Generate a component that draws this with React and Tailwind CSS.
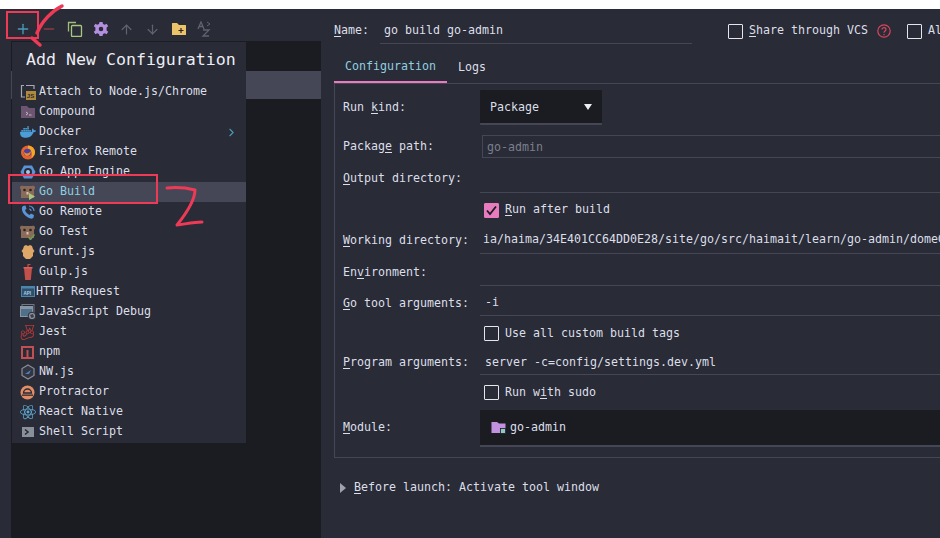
import React from 'react';
import { Plus, Minus, ArrowUp, ArrowDown, ChevronRight } from 'lucide-react';
import { SiDocker, SiJest, SiReact } from 'react-icons/si';

const mono = '[font-family:"DejaVu_Sans_Mono",monospace]';

const Gopher = ({ badge }) => (
  <svg width="17" height="16" viewBox="0 0 17 16">
    <path d="M1 3.500 C1 2 2.500 1.500 4 2 L13 2 C14.500 1.500 16 2 16 3.500 C16 5 15 5.500 15 6 L15 14 L2 14 L2 6 C2 5.500 1 5 1 3.500 Z" fill="#8a6a58" />
    <circle cx="5.500" cy="6" r="1.300" fill="#2b2320" />
    <circle cx="11.500" cy="6" r="1.300" fill="#2b2320" />
    <rect x="7.500" y="8" width="2" height="2.500" fill="#d8c4b0" />
    {badge === 'run' && <path d="M10 9 L16 12.500 L10 16 Z" fill="#a9c77f" />}
    {badge === 'test' && <path d="M9.500 13 L11.500 15.500 L15.500 10.500" fill="none" stroke="#6f9c55" strokeWidth="1.500" />}
  </svg>
);

const NodeAttach = () => (
  <svg width="16" height="16" viewBox="0 0 16 16">
    <path d="M6 1.500 H14 V5 M1.500 4 V13 H5" fill="none" stroke="#a5a9b5" strokeWidth="1.200" />
    <path d="M1.500 4 V1.500 H4" fill="none" stroke="#a5a9b5" strokeWidth="1.200" />
    <rect x="6" y="7" width="10" height="9" fill="#b08a3c" />
    <text x="6.800" y="14.300" fontSize="6" fontWeight="700" fill="#292b36" fontFamily="Liberation Sans">JS</text>
  </svg>
);

const Compound = () => (
  <svg width="16" height="16" viewBox="0 0 16 16">
    <path d="M1 2 H7 L9 4 H15 V14 H1 Z" fill="#6b5570" />
    <path d="M6 8 L8 9.500 L6 11 M9 11 H11.500" fill="none" stroke="#c9b9cc" strokeWidth="1" />
  </svg>
);

const Firefox = () => (
  <svg width="16" height="16" viewBox="0 0 16 16">
    <circle cx="8" cy="8.500" r="7" fill="#e8622c" />
    <path d="M8 1.500 A7 7 0 0 1 15 8.500 C15 11 13 13 11 14 C13 11 12 7 8 5 Z" fill="#f5a623" />
    <circle cx="7.500" cy="8.500" r="3.800" fill="#4a3fa5" />
    <path d="M4 8 C6 10 9 10 11 7 C11 10 9 12 7 12 C5 12 4 10 4 8 Z" fill="#f08a24" />
  </svg>
);

const AppEngine = () => (
  <svg width="16" height="16" viewBox="0 0 16 16">
    <path d="M4 1.500 H12 L15.500 8 L12 14.500 H4 L0.500 8 Z" fill="#5a93d6" />
    <circle cx="8" cy="8" r="4" fill="#292b36" />
    <circle cx="8" cy="8" r="2" fill="#a9c6e8" />
  </svg>
);

const GoRemote = () => (
  <svg width="16" height="16" viewBox="0 0 16 16">
    <path d="M3 2 L5.500 1.500 L6.500 5 L5 6 C5.500 8 7.500 10 9.500 11 L11 9.500 L14 11 L13.500 13.500 C13 15 10.500 15 8 13.500 C5 12 2.500 9 2 6 C1.700 4 2 2.800 3 2 Z" fill="#5a93d6" />
    <path d="M9 2 A5 5 0 0 1 14 7 M9 5 A2 2 0 0 1 11 7" fill="none" stroke="#5a93d6" strokeWidth="1.200" />
  </svg>
);

const Grunt = () => (
  <svg width="16" height="16" viewBox="0 0 16 16">
    <path d="M4 2 L6 1 L8 2 L10 1 L12 2 L13 5 L14.500 7 L13 9 L13 12 L10 15 L6 15 L3 12 L3 9 L1.500 7 L3 5 Z" fill="#e0a868" />
  </svg>
);

const Gulp = () => (
  <svg width="16" height="17" viewBox="0 0 16 17">
    <path d="M4 4 H12 L10.800 16 H5.200 Z" fill="#c4504c" />
    <path d="M3.500 3 H12.500 V4.500 H3.500 Z" fill="#d9625c" />
    <path d="M8 3 V0.800 L10.500 0.200" fill="none" stroke="#c4504c" strokeWidth="1.200" />
  </svg>
);

const HttpRequest = () => (
  <svg width="14" height="12" viewBox="0 0 14 12">
    <rect x="0.500" y="0.500" width="13" height="10" fill="#2f4f6b" stroke="#4d86ad" />
    <rect x="0.500" y="0.500" width="13" height="2" fill="#4d86ad" />
    <text x="2.500" y="8.500" fontSize="4.500" fontWeight="700" fill="#a9cfe8" fontFamily="Liberation Sans">API</text>
  </svg>
);

const JsDebug = () => (
  <svg width="16" height="16" viewBox="0 0 16 16">
    <rect x="2" y="0.500" width="12" height="10" fill="none" stroke="#6f7684" />
    <rect x="0.500" y="2.500" width="12" height="10" fill="#4e7189" stroke="#8a95a3" />
    <rect x="1" y="3" width="11" height="2" fill="#8a95a3" />
    <circle cx="12" cy="12" r="3.800" fill="#8a8e99" stroke="#292b36" />
    <path d="M10 11 L13 10 L14 13 L11.500 14 Z" fill="#3a3d49" />
  </svg>
);

const Npm = () => (
  <svg width="13" height="13" viewBox="0 0 13 13">
    <rect x="1" y="1" width="11" height="11" fill="none" stroke="#c24f52" strokeWidth="2" />
    <rect x="5.500" y="4" width="2" height="7" fill="#c24f52" />
  </svg>
);

const Nw = () => (
  <svg width="14" height="16" viewBox="0 0 14 16">
    <path d="M7 1 L13 4.500 V11.500 L7 15 L1 11.500 V4.500 Z" fill="#32353f" stroke="#8a8e99" strokeWidth="1.200" />
    <path d="M4 10 L10 6 L8 10 Z" fill="#4d7fc4" />
  </svg>
);

const Protractor = () => (
  <svg width="15" height="15" viewBox="0 0 15 15">
    <circle cx="7.500" cy="7.500" r="7" fill="#e28d66" />
    <path d="M3.500 8 A4 4 0 0 1 11.500 8 Z" fill="none" stroke="#292b36" strokeWidth="1.300" />
    <rect x="2" y="9.500" width="11" height="1.300" fill="#292b36" />
  </svg>
);

const Shell = () => (
  <svg width="12" height="10" viewBox="0 0 12 10">
    <rect width="12" height="10" fill="#8a9099" />
    <path d="M3 2.500 L6 5 L3 7.500" fill="none" stroke="#292b36" strokeWidth="1.600" />
  </svg>
);

const items = [
  { name: 'Attach to Node.js/Chrome', icon: <NodeAttach /> },
  { name: 'Compound', icon: <Compound /> },
  { name: 'Docker', icon: <SiDocker size={16} color="#4a9fd8" />, more: true },
  { name: 'Firefox Remote', icon: <Firefox /> },
  { name: 'Go App Engine', icon: <AppEngine /> },
  { name: 'Go Build', icon: <Gopher badge="run" />, active: true },
  { name: 'Go Remote', icon: <GoRemote /> },
  { name: 'Go Test', icon: <Gopher badge="test" /> },
  { name: 'Grunt.js', icon: <Grunt /> },
  { name: 'Gulp.js', icon: <Gulp /> },
  { name: 'HTTP Request', icon: <HttpRequest />, tight: true },
  { name: 'JavaScript Debug', icon: <JsDebug /> },
  { name: 'Jest', icon: <SiJest size={15} color="#b83a3a" /> },
  { name: 'npm', icon: <Npm /> },
  { name: 'NW.js', icon: <Nw /> },
  { name: 'Protractor', icon: <Protractor /> },
  { name: 'React Native', icon: <SiReact size={16} color="#5fa8d3" /> },
  { name: 'Shell Script', icon: <Shell /> },
];

const Check = ({ checked }) => (
  <span className={`flex w-[15px] h-[15px] shrink-0 items-center justify-center rounded-[1px] border ${checked ? 'border-[#e87ac0] bg-[#e87ac0]' : 'border-[#e4e6ec]'}`}>
    {checked && (
      <svg width="13" height="13" viewBox="0 0 13 13">
        <path d="M2 6.500 L5 10 L11 2.500" fill="none" stroke="#1b1c21" strokeWidth="1.800" />
      </svg>
    )}
  </span>
);

const Label = ({ before, mark, after }) => (
  <div className="w-[145px] shrink-0 whitespace-pre pl-[8px]">
    {before}<span className="underline underline-offset-2">{mark}</span>{after}
  </div>
);

const Row = ({ h, label, children, line }) => (
  <div className={`flex items-center ${h}`}>
    {label || <div className="w-[145px] shrink-0" />}
    <div className={`flex h-full min-w-0 flex-1 items-center whitespace-pre ${line ? 'border-b border-[#454757]' : ''}`}>
      {children}
    </div>
  </div>
);

const Toolbar = () => (
  <div className="flex h-[32px] items-center pl-[15px] pt-[8px]">
    <div className="flex w-[26px] justify-start"><Plus size={16} color="#4a9bb8" /></div>
    <div className="flex w-[26px] justify-start"><Minus size={16} color="#8a3b45" /></div>
    <div className="flex w-[26px] justify-start">
      <svg width="16" height="16" viewBox="0 0 16 16">
        <path d="M1.500 10.500 V1.500 H9" fill="none" stroke="#9fbf78" strokeWidth="1.300" />
        <rect x="4.500" y="4.500" width="10" height="11" rx="1" fill="none" stroke="#a9c77f" strokeWidth="1.300" />
      </svg>
    </div>
    <div className="flex w-[26px] justify-start">
      <svg width="16" height="16" viewBox="0 0 16 16">
        <path fillRule="evenodd" fill="#b48fe0" d="M6.500 1 H9.500 L10 3 L11.800 3.800 L13.600 2.800 L15.200 5.300 L13.600 6.600 V9.400 L15.200 10.700 L13.600 13.200 L11.800 12.200 L10 13 L9.500 15 H6.500 L6 13 L4.200 12.200 L2.400 13.200 L0.800 10.700 L2.400 9.400 V6.600 L0.800 5.300 L2.400 2.800 L4.200 3.800 L6 3 Z M8 5.700 A2.300 2.300 0 1 0 8 10.300 A2.300 2.300 0 1 0 8 5.700 Z" />
      </svg>
    </div>
    <div className="flex w-[26px] justify-start"><ArrowUp size={15} color="#5f6371" /></div>
    <div className="flex w-[26px] justify-start"><ArrowDown size={15} color="#5f6371" /></div>
    <div className="flex w-[26px] justify-start">
      <svg width="16" height="14" viewBox="0 0 16 14">
        <path d="M1 1.500 Q1 1 1.500 1 H6 L8 3 H14.500 Q15 3 15 3.500 V12.500 Q15 13 14.500 13 H1.500 Q1 13 1 12.500 Z" fill="#ecc26b" />
        <path d="M10 6 V11 M7.500 8.500 H12.500" stroke="#2b2320" strokeWidth="1.200" />
      </svg>
    </div>
    <div className="flex w-[26px] justify-start">
      <svg width="14" height="16" viewBox="0 0 14 16">
        <path d="M1 8 L4 1 L7 8 M2.200 5.500 H5.800" fill="none" stroke="#5f6371" strokeWidth="1.300" />
        <path d="M6 9 H12 L6 15 H12" fill="none" stroke="#5f6371" strokeWidth="1.300" />
        <path d="M10 1 L13 3 L10 5" fill="none" stroke="#5f6371" strokeWidth="1" />
      </svg>
    </div>
  </div>
);

const Popup = () => (
  <div className="absolute left-[12px] top-[41px] z-10 h-[402px] w-[234px] border-t border-[#1b1c21] bg-[#292b36]">
    <div className="flex h-[37px] items-center pl-[14px] text-[16.6px] font-medium text-[#eceef4]">Add New Configuration</div>
    <div className="mt-[3px]">
      {items.map((item) => (
        <div key={item.name} className={`flex h-[20px] items-center pl-[7px] ${item.active ? 'bg-[#454757] text-[#8fcfe0]' : ''}`}>
          <div className={`flex w-[17px] shrink-0 items-center justify-center ${item.tight ? '' : 'mr-[3px]'}`}>{item.icon}</div>
          <span className="flex-1 whitespace-pre">{item.name}</span>
          {item.more && <ChevronRight size={13} color="#4a9bb8" className="mr-[8px]" />}
        </div>
      ))}
    </div>
  </div>
);

const Marks = () => (
  <svg className="pointer-events-none absolute left-0 top-0 z-20" width="260" height="240" viewBox="0 0 260 240">
    <g fill="none" stroke="#ee3a56">
      <rect x="7" y="12" width="31" height="26" strokeWidth="2" />
      <rect x="9" y="175" width="148" height="28" strokeWidth="2" />
      <path d="M62 6 C52 11 42 21 37 33" strokeWidth="3.500" strokeLinecap="round" />
      <path d="M32 38 L40 45" strokeWidth="3.500" strokeLinecap="round" />
      <path d="M167 188 C177 187 187 188 195 190 C195 200 185 215 177 225 C185 224 195 222 202 222" strokeWidth="3" strokeLinecap="round" strokeLinejoin="round" />
    </g>
  </svg>
);

export default function App() {
  return (
    <div className={`relative flex h-[538px] w-[940px] flex-col overflow-hidden bg-white text-[11.63px] text-[#dcdfe8] ${mono}`}>
      <div className="h-[9px] shrink-0 bg-white" />
      <div className="flex min-h-0 flex-1 bg-[#292b36]">
        <div className="flex w-[322px] shrink-0 flex-col">
          <Toolbar />
          <div className="ml-[11px] mr-[1px] min-h-0 flex-1 bg-[#1b1c21] pt-[30px]">
            <div className="h-[28px] bg-[#454757]" />
          </div>
        </div>

        <div className="min-w-0 flex-1 pl-[12px]">
          <div className="flex h-[34px] items-start">
            <div className="flex h-[35px] w-[358px] shrink-0 items-center pt-[9px]">
              <div className="w-[46px] shrink-0 whitespace-pre"><span className="underline underline-offset-2">N</span>ame:</div>
              <div className="flex h-full flex-1 items-center border-b border-[#454757] pl-[4px] whitespace-pre">go build go-admin</div>
            </div>
            <div className="ml-[36px] mt-[11px] flex h-[22px] shrink-0 items-center whitespace-pre">
              <Check />
              <span className="ml-[6px]"><span className="underline underline-offset-2">S</span>hare through VCS</span>
              <svg className="ml-[9px]" width="14" height="14" viewBox="0 0 14 14">
                <circle cx="7" cy="7" r="6.200" fill="none" stroke="#d9455f" strokeWidth="1.200" />
                <path d="M5 5.500 C5 3 9 3 9 5.500 C9 7 7 7 7 8.800 M7 10 V11.200" fill="none" stroke="#d9455f" strokeWidth="1.200" />
              </svg>
              <span className="ml-[16px]"><Check /></span>
              <span className="ml-[6px]">Al</span>
            </div>
          </div>

          <div className="mt-[4px] flex h-[37px] items-end border-b border-[#454757]">
            <div className="flex h-[36px] w-[113px] items-center justify-center border-b-2 border-[#e87ac0] pt-[5px] text-[#8fcfe0]">Configuration</div>
            <div className="flex h-[36px] items-center pl-[11px] pt-[5px]">Logs</div>
          </div>

          <div className="h-[374px] border-b border-l border-[#454757] pt-[6px]">
            <div className="flex h-[35px] items-center">
              <Label before="Run " mark="k" after="ind:" />
              <div className="flex h-full w-[122px] items-center justify-between rounded-[1px] border-b-2 border-[#454757] bg-[#1b1c21] pl-[10px] pr-[10px]">
                <span className="pt-[2px]">Package</span>
                <svg width="8" height="6" viewBox="0 0 8 6"><path d="M0 0 H8 L4 6 Z" fill="#eceef4" /></svg>
              </div>
            </div>
            <div className="mt-[10px] flex h-[23px] items-center">
              <Label before="Packag" mark="e" after=" path:" />
              <div className="ml-[2px] flex h-full flex-1 items-center border border-r-0 border-[#454757] pl-[4px] pt-[2px] text-[#7a7f8e]">go-admin</div>
            </div>
            <div className="mt-[6px]">
              <Row h="h-[29px]" line label={<Label before="" mark="O" after="utput directory:" />} />
            </div>
            <Row h="h-[34px]">
              <div className="flex items-center pl-[4px]">
                <Check checked />
                <span className="ml-[6px]"><span className="underline underline-offset-2">R</span>un after build</span>
              </div>
            </Row>
            <Row h="h-[27px]" line label={<Label before="" mark="W" after="orking directory:" />}>
              <span className="pl-[3px]">ia/haima/34E401CC64DD0E28/site/go/src/haimait/learn/go-admin/domeGorm</span>
            </Row>
            <div className="mt-[6px]">
              <Row h="h-[26px]" line label={<Label before="En" mark="v" after="ironment:" />} />
            </div>
            <div className="mt-[5px]">
              <Row h="h-[25px]" line label={<Label before="" mark="G" after="o tool arguments:" />}>
                <span className="pl-[5px]">-i</span>
              </Row>
            </div>
            <Row h="h-[35px]">
              <div className="flex items-center pl-[4px]">
                <Check />
                <span className="ml-[6px]">Use all custom build tags</span>
              </div>
            </Row>
            <Row h="h-[24px]" line label={<Label before="" mark="P" after="rogram arguments:" />}>
              <span className="pl-[5px]">server -c=config/settings.dev.yml</span>
            </Row>
            <Row h="h-[35px]">
              <div className="flex items-center pl-[4px]">
                <Check />
                <span className="ml-[6px]">Run w<span className="underline underline-offset-2">i</span>th sudo</span>
              </div>
            </Row>
            <div className="flex h-[37px] items-center">
              <div className="pb-[2px]"><Label before="" mark="M" after="odule:" /></div>
              <div className="flex h-full flex-1 items-center border-b-2 border-[#454757] bg-[#1b1c21] pl-[11px]">
                <svg width="15" height="13" viewBox="0 0 15 13">
                  <path d="M0.500 1 H6 L8 2.500 H14.500 V12 H0.500 Z" fill="#c191e0" />
                  <rect x="9.500" y="7.500" width="5" height="5" fill="#8fc7c4" stroke="#1b1c21" strokeWidth="0.800" />
                </svg>
                <span className="ml-[4px]">go-admin</span>
              </div>
            </div>
          </div>

          <div className="mt-[22px] flex h-[16px] items-center whitespace-pre pl-[6px]">
            <svg width="6" height="10" viewBox="0 0 6 10"><path d="M0 0 L6 5 L0 10 Z" fill="#9ea2ae" /></svg>
            <span className="ml-[8px]"><span className="underline underline-offset-2">B</span>efore launch: Activate tool window</span>
          </div>
        </div>
      </div>
      <Popup />
      <Marks />
    </div>
  );
}
